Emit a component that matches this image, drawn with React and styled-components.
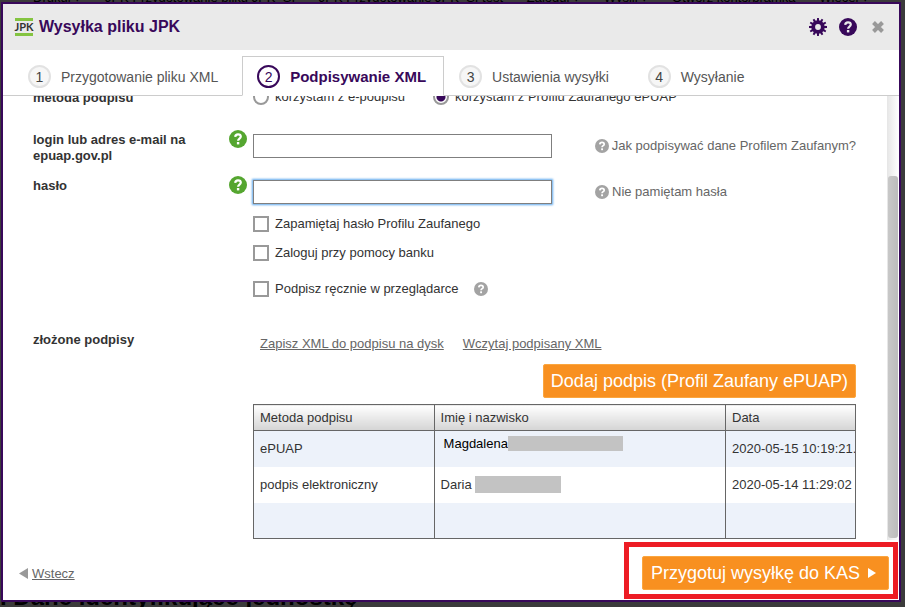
import React, { useLayoutEffect, useRef } from "react";
import styled, { createGlobalStyle } from "styled-components";

const GlobalStyle = createGlobalStyle`
  * {
    box-sizing: border-box;
  }
  body {
    margin: 0;
    background: #3b3b3b;
    font-family: "Liberation Sans", Arial, sans-serif;
    font-size: 13px;
    line-height: 16px;
    color: #333;
  }
  button,
  input {
    font-family: inherit;
  }
`;

const Page = styled.div`
  display: flex;
  flex-direction: column;
  justify-content: space-between;
  height: 100vh;
  overflow: hidden;
  color: #000;
`;

const PageToolbar = styled.div`
  display: flex;
  justify-content: space-between;
  align-items: flex-end;
  height: 6px;
  padding: 0 36px 0 33px;
  white-space: nowrap;
`;

const PageHeading = styled.h2`
  margin: 0;
  height: 22px;
  font-size: 24px;
  line-height: 24px;
`;

const Overlay = styled.div`
  position: fixed;
  inset: 0;
  display: flex;
  padding: 2px 4px 5px 1px;
`;

const Dialog = styled.div`
  display: flex;
  flex-direction: column;
  flex: 1;
  min-width: 0;
  border: 2px solid #38085a;
  background: #fff;
`;

const Header = styled.header`
  display: flex;
  align-items: center;
  gap: 6px;
  height: 46px;
  padding: 0 11px 0 12px;
  background: #eaeaea;
`;

const Logo = styled.span`
  display: flex;
  justify-content: center;
  width: 18px;
  border-top: 3px solid #84c441;
  border-bottom: 3px solid #84c441;
  font-family: Lato, sans-serif;
  font-size: 11px;
  font-weight: bold;
  line-height: 12px;
  color: #333;
`;

const Title = styled.h1`
  flex: 1;
  margin: 0;
  font-size: 16px;
  line-height: 20px;
  color: #38085a;
`;

const HeaderButton = styled.button`
  display: flex;
  align-items: center;
  justify-content: center;
  width: 20px;
  height: 20px;
  margin-left: 4px;
  padding: 0;
  border: 0;
  background: none;
`;

const Tabs = styled.div`
  display: flex;
  height: 46px;
  padding: 6px 0 0 10px;
  border-bottom: 1px solid #ccc;
`;

const Tab = styled.button`
  display: flex;
  align-items: center;
  gap: 10px;
  height: 40px;
  padding: 1px ${(p) => (p.$active ? 17 : 23)}px 0 14px;
  border: 1px solid ${(p) => (p.$active ? "#ccc" : "transparent")};
  border-bottom-color: ${(p) => (p.$active ? "#fff" : "#ccc")};
  background: none;
  font-size: ${(p) => (p.$active ? 15 : 14)}px;
  font-weight: ${(p) => (p.$active ? "bold" : "normal")};
  color: ${(p) => (p.$active ? "#38085a" : "#555")};
  white-space: nowrap;
`;

const TabNumber = styled.span`
  display: flex;
  align-items: center;
  justify-content: center;
  width: 23px;
  height: 23px;
  border: 2px solid ${(p) => (p.$active ? "#38085a" : "#e2e2e2")};
  border-radius: 50%;
  background: ${(p) => (p.$active ? "#fff" : "#f6f6f6")};
  font-size: 14px;
  font-weight: normal;
  color: ${(p) => (p.$active ? "#38085a" : "#444")};
`;

const Body = styled.div`
  display: flex;
  flex: 1;
  min-height: 0;
`;

const Scroller = styled.div`
  flex: 1;
  min-width: 0;
  overflow: auto;
  scrollbar-width: none;
`;

const Form = styled.div`
  padding: 87px 31px 1px 30px;
`;

const Track = styled.div`
  display: flex;
  flex-direction: column;
  justify-content: flex-end;
  width: 12px;
  padding: 0 1px 2px;
  background: linear-gradient(to right, #e6e6e6, #fff);
`;

const Thumb = styled.div`
  height: 82%;
  border-radius: 3px;
  background: linear-gradient(to right, #c8c8c8, #bcbcbc);
`;

const Row = styled.div`
  display: grid;
  grid-template-columns: 172px 24px 24px minmax(0, 1fr);
  align-items: start;
  padding-top: ${(p) => p.$top || 0}px;
  margin-bottom: ${(p) => p.$space || 0}px;
`;

const RowLabel = styled.label`
  padding-top: 1px;
  font-weight: bold;
`;

const RowHelp = styled.span`
  display: flex;
  grid-column: 3;
  margin-top: -1px;
`;

const RowField = styled.div`
  display: flex;
  grid-column: 4;
  align-items: center;
  padding-top: ${(p) => p.$top || 0}px;
`;

const TextInput = styled.input`
  flex: 0 1 299px;
  min-width: 0;
  height: 24px;
  padding: 2px 6px;
  border: 1px solid #7f7f7f;
  border-radius: 0;
  outline: none;
  font-size: 13px;
  box-shadow: ${(p) => (p.$focused ? "0 0 2px 1px #5ea9ee" : "none")};
`;

const Hint = styled.a`
  display: flex;
  align-items: center;
  gap: 3px;
  margin-left: 43px;
  color: #666;
  text-decoration: none;
  white-space: nowrap;
`;

const Choice = styled.label`
  display: flex;
  align-items: center;
  gap: 6px;
  min-width: ${(p) => p.$width || 0}px;
  white-space: nowrap;
`;

const Radio = styled.input`
  appearance: none;
  width: 16px;
  height: 16px;
  margin: 0;
  border: 2px solid #999;
  border-radius: 50%;
  background: #fff;
  &:checked {
    background: radial-gradient(circle, #38085a 4px, #fff 5px);
  }
`;

const Checkbox = styled.input`
  appearance: none;
  width: 16px;
  height: 16px;
  margin: 0;
  border: 2px solid #999;
  background: #fff;
`;

const Checks = styled.div`
  display: flex;
  flex-direction: column;
  gap: 13px;
  padding: 12px 0 0 220px;
`;

const CheckRow = styled.div`
  display: flex;
  align-items: center;
  gap: 15px;
  margin-top: ${(p) => p.$top || 0}px;
`;

const XmlLinks = styled.div`
  display: flex;
  gap: 19px;
  padding: 5px 0 0 7px;
`;

const TextLink = styled.a`
  color: #666;
  text-decoration: underline;
  white-space: nowrap;
`;

const OrangeButton = styled.button`
  display: flex;
  align-items: center;
  gap: 8px;
  height: 34px;
  padding: 0 ${(p) => (p.$arrow ? "12px 0 8px" : "7px")};
  border: 1px solid #fba63f;
  border-radius: 2px;
  background: #f89020;
  font-size: 18px;
  color: #fff;
  white-space: nowrap;
`;

const ButtonLine = styled.div`
  display: flex;
  justify-content: flex-end;
  padding: 12px 0 6px;
`;

const SignatureTable = styled.table`
  width: calc(100% - 220px);
  margin-left: 220px;
  border: 1px solid #666;
  border-collapse: collapse;
  table-layout: fixed;
  th {
    height: 26px;
    padding: 0 6px;
    border: 1px solid #666;
    background: linear-gradient(#fff, #d4d4d4);
    font-weight: normal;
    text-align: left;
  }
  td {
    height: 36px;
    padding: 0 0 0 6px;
    border-left: 1px solid #666;
    white-space: nowrap;
    overflow: hidden;
  }
  tbody tr:nth-child(odd) {
    background: #edf2fa;
  }
`;

const Person = styled.span`
  display: flex;
  align-items: center;
  gap: ${(p) => (p.$raised ? 0 : 3)}px;
  margin: ${(p) => (p.$raised ? "-10px 0 0 3px" : "0")};
  color: ${(p) => (p.$raised ? "#000" : "inherit")};
`;

const Redacted = styled.span`
  width: ${(p) => p.$width}px;
  height: ${(p) => p.$height}px;
  background: #c3c3c3;
`;

const Footer = styled.footer`
  display: flex;
  align-items: center;
  justify-content: space-between;
  height: 60px;
  padding: 2px 1px 1px 16px;
`;

const Back = styled.div`
  display: flex;
  align-items: center;
  gap: 4px;
  padding-top: 6px;
`;

const Highlight = styled.div`
  padding: 9px 4px 4px 13px;
  border: 5px solid #ed1c24;
`;

const HelpIcon = ({ size, color, mark = "#fff" }) => (
  <svg width={size} height={size} viewBox="0 0 18 18" aria-hidden="true">
    <circle cx="9" cy="9" r="9" fill={color} />
    <path
      d="M6.2 6.9C6.3 5.1 7.4 4.3 9 4.3c1.7 0 2.8.9 2.8 2.3 0 2-2.7 2-2.7 4.1"
      fill="none"
      stroke={mark}
      strokeWidth="2.2"
    />
    <rect x="7.9" y="12" width="2.4" height="2.4" fill={mark} />
  </svg>
);

const teeth = [0, 30, 60, 90, 120, 150, 180, 210, 240, 270, 300, 330];

const GearIcon = () => (
  <svg width="20" height="20" viewBox="0 0 20 20" aria-hidden="true">
    {teeth.map((angle) => (
      <path
        key={angle}
        d="M8.8 5 9.1 1h1.8l.3 4z"
        fill="#38085a"
        transform={`rotate(${angle} 10 10)`}
      />
    ))}
    <circle cx="10" cy="10" r="4.8" fill="none" stroke="#38085a" strokeWidth="3.8" />
  </svg>
);

const CloseIcon = () => (
  <svg width="20" height="20" viewBox="0 0 20 20" aria-hidden="true">
    <path d="M5.5 5.5l9 9M14.5 5.5l-9 9" stroke="#999" strokeWidth="4" />
  </svg>
);

const steps = [
  "Przygotowanie pliku XML",
  "Podpisywanie XML",
  "Ustawienia wysyłki",
  "Wysyłanie",
];

const App = () => {
  const scroller = useRef(null);

  useLayoutEffect(() => {
    scroller.current.scrollTop = scroller.current.scrollHeight;
  }, []);

  return (
    <>
      <GlobalStyle />
      <Page aria-hidden="true">
        <PageToolbar>
          <span>Drukuj ▾</span>
          <span>JPK Przygotowanie pliku JPK_SI</span>
          <span>JPK Przygotowanie JPK_SI test</span>
          <span>Zaloguj ▾</span>
          <span>Wyślij ▾</span>
          <span>Otwórz konto/bramka</span>
          <span>Więcej ▾</span>
        </PageToolbar>
        <PageHeading>. Dane identyfikujące jednostkę</PageHeading>
      </Page>
      <Overlay>
        <Dialog role="dialog" aria-labelledby="dialog-title">
          <Header>
            <Logo>JPK</Logo>
            <Title id="dialog-title">Wysyłka pliku JPK</Title>
            <HeaderButton aria-label="Ustawienia">
              <GearIcon />
            </HeaderButton>
            <HeaderButton aria-label="Pomoc">
              <HelpIcon size={18} color="#38085a" mark="#eaeaea" />
            </HeaderButton>
            <HeaderButton aria-label="Zamknij">
              <CloseIcon />
            </HeaderButton>
          </Header>
          <Tabs role="tablist">
            {steps.map((step, i) => (
              <Tab key={step} role="tab" aria-selected={i === 1} $active={i === 1}>
                <TabNumber $active={i === 1}>{i + 1}</TabNumber>
                {step}
              </Tab>
            ))}
          </Tabs>
          <Body>
            <Scroller ref={scroller}>
              <Form>
                <Row $space={25}>
                  <RowLabel as="span">metoda podpisu</RowLabel>
                  <RowField>
                    <Choice $width={180}>
                      <Radio type="radio" name="method" />
                      korzystam z e-podpisu
                    </Choice>
                    <Choice>
                      <Radio type="radio" name="method" defaultChecked />
                      korzystam z Profilu Zaufanego ePUAP
                    </Choice>
                  </RowField>
                </Row>
                <Row $space={13}>
                  <RowLabel htmlFor="login">
                    login lub adres e-mail na epuap.gov.pl
                  </RowLabel>
                  <RowHelp>
                    <HelpIcon size={18} color="#55a630" />
                  </RowHelp>
                  <RowField $top={3}>
                    <TextInput id="login" type="text" />
                    <Hint href="#profil">
                      <HelpIcon size={14} color="#a3a3a3" />
                      Jak podpisywać dane Profilem Zaufanym?
                    </Hint>
                  </RowField>
                </Row>
                <Row>
                  <RowLabel htmlFor="password">hasło</RowLabel>
                  <RowHelp>
                    <HelpIcon size={18} color="#55a630" />
                  </RowHelp>
                  <RowField $top={3}>
                    <TextInput id="password" type="password" $focused />
                    <Hint href="#haslo">
                      <HelpIcon size={14} color="#a3a3a3" />
                      Nie pamiętam hasła
                    </Hint>
                  </RowField>
                </Row>
                <Checks>
                  <CheckRow>
                    <Choice>
                      <Checkbox type="checkbox" />
                      Zapamiętaj hasło Profilu Zaufanego
                    </Choice>
                  </CheckRow>
                  <CheckRow>
                    <Choice>
                      <Checkbox type="checkbox" />
                      Zaloguj przy pomocy banku
                    </Choice>
                  </CheckRow>
                  <CheckRow $top={7}>
                    <Choice>
                      <Checkbox type="checkbox" />
                      Podpisz ręcznie w przeglądarce
                    </Choice>
                    <HelpIcon size={14} color="#a3a3a3" />
                  </CheckRow>
                </Checks>
                <Row $top={34}>
                  <RowLabel as="span">złożone podpisy</RowLabel>
                  <RowField>
                    <XmlLinks>
                      <TextLink href="#zapisz">Zapisz XML do podpisu na dysk</TextLink>
                      <TextLink href="#wczytaj">Wczytaj podpisany XML</TextLink>
                    </XmlLinks>
                  </RowField>
                </Row>
                <ButtonLine>
                  <OrangeButton>Dodaj podpis (Profil Zaufany ePUAP)</OrangeButton>
                </ButtonLine>
                <SignatureTable>
                  <colgroup>
                    <col width="30%" />
                    <col />
                    <col width="130" />
                  </colgroup>
                  <thead>
                    <tr>
                      <th>Metoda podpisu</th>
                      <th>Imię i nazwisko</th>
                      <th>Data</th>
                    </tr>
                  </thead>
                  <tbody>
                    <tr>
                      <td>ePUAP</td>
                      <td>
                        <Person $raised>
                          Magdalena <Redacted $width={115} $height={15} />
                        </Person>
                      </td>
                      <td>2020-05-15 10:19:21.</td>
                    </tr>
                    <tr>
                      <td>podpis elektroniczny</td>
                      <td>
                        <Person>
                          Daria <Redacted $width={86} $height={17} />
                        </Person>
                      </td>
                      <td>2020-05-14 11:29:02</td>
                    </tr>
                    <tr>
                      <td />
                      <td />
                      <td />
                    </tr>
                  </tbody>
                </SignatureTable>
              </Form>
            </Scroller>
            <Track>
              <Thumb />
            </Track>
          </Body>
          <Footer>
            <Back>
              <svg width="9" height="11" viewBox="0 0 9 11" aria-hidden="true">
                <path d="M9 0v11L0 5.5z" fill="#999" />
              </svg>
              <TextLink href="#wstecz">Wstecz</TextLink>
            </Back>
            <Highlight>
              <OrangeButton $arrow>
                Przygotuj wysyłkę do KAS
                <svg width="8" height="10" viewBox="0 0 8 10" aria-hidden="true">
                  <path d="M0 0v10l8-5z" fill="#fff" />
                </svg>
              </OrangeButton>
            </Highlight>
          </Footer>
        </Dialog>
      </Overlay>
    </>
  );
};

export default App;
